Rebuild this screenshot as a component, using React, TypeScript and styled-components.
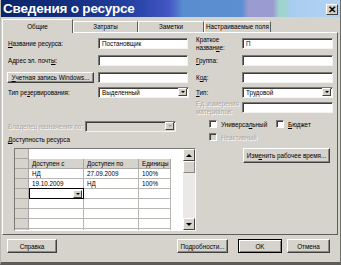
import React from 'react';
import styled, { createGlobalStyle } from 'styled-components';

const GlobalStyle = createGlobalStyle`
  html, body {
    margin: 0;
    padding: 0;
    background: #d6d2cc;
  }
  body {
    font-family: "Liberation Sans", Arial, sans-serif;
    font-size: 6.3px;
    color: #000;
  }
`;

const Window = styled.div`
  width: 341px;
  height: 265px;
  box-sizing: border-box;
  background: #d6d2cc;
  border-left: 1px solid #bcb9b3;
  border-right: 1px solid #6f6d69;
  border-bottom: 3px solid #5e5c58;
  display: flex;
  flex-direction: column;
  overflow: hidden;
`;

const TitleBar = styled.div`
  height: 17px;
  flex: none;
  display: flex;
  align-items: center;
  justify-content: space-between;
  padding: 0 2px 0 2px;
  background: linear-gradient(90deg,
    #0a2669 0px, #142f80 70px, #2442a3 130px, #4456c4 168px,
    #5a8dcf 182px, #5c8fd1 241px, #999bd1 247px, #9b9bd0 272px,
    #9fd4cc 278px, #a0d3cf 284px, #a9cdf0 290px, #b3d3f2 341px);
`;

const Caption = styled.div`
  color: #fff;
  font-weight: bold;
  font-size: 13.5px;
  letter-spacing: -0.2px;
  line-height: 17px;
`;

const CloseButton = styled.div`
  width: 12px;
  height: 11px;
  margin-top: 2px;
  box-sizing: border-box;
  background: #d4d0c8;
  border: 1px solid;
  border-color: #fff #404040 #404040 #fff;
  display: flex;
  align-items: center;
  justify-content: center;
  font-weight: bold;
  font-size: 10px;
  line-height: 9px;
`;

const Body = styled.div`
  flex: 1;
  display: flex;
  flex-direction: column;
  padding: 0 2px 0 1px;
`;

const TabStrip = styled.div`
  height: 15px;
  display: flex;
  align-items: flex-end;
  position: relative;
  z-index: 1;
`;

const Tab = styled.div<{ $w: number; $active?: boolean }>`
  width: ${p => p.$w}px;
  height: ${p => (p.$active ? 14 : 11)}px;
  margin-bottom: ${p => (p.$active ? -1 : 0)}px;
  box-sizing: border-box;
  background: #d6d2cc;
  border: 1px solid;
  border-bottom: none;
  border-color: #fff #5f5d59 transparent #fff;
  text-align: center;
  line-height: ${p => (p.$active ? 12 : 10)}px;
  padding-top: ${p => (p.$active ? 1 : 0)}px;
  white-space: nowrap;
`;

const Panel = styled.div`
  height: 203px;
  box-sizing: border-box;
  border: 1px solid;
  border-color: #fff #5f5d59 #5f5d59 #fff;
  padding: 5px 3px 0 5px;
  display: flex;
  gap: 5px;
`;

const LeftCol = styled.div`
  width: 183px;
  display: flex;
  flex-direction: column;
`;

const RightCol = styled.div`
  width: 140px;
  display: flex;
  flex-direction: column;
`;

const Row = styled.div<{ $top?: number; $h?: number }>`
  display: flex;
  align-items: center;
  height: ${p => p.$h ?? 11}px;
  margin-top: ${p => p.$top ?? 0}px;
`;

const Label = styled.div<{ $w: number; $disabled?: boolean }>`
  width: ${p => p.$w}px;
  flex: none;
  white-space: nowrap;
  color: ${p => (p.$disabled ? '#aaa8a4' : '#000')};
  text-shadow: ${p => (p.$disabled ? '1px 1px 0 #fff' : 'none')};
`;

const TwoLineLabel = styled(Label)`
  line-height: 8px;
  align-self: flex-start;
  margin-top: -2px;
`;

const Input = styled.div<{ $w: number }>`
  width: ${p => p.$w}px;
  height: 11px;
  box-sizing: border-box;
  background: #fff;
  border: 1px solid;
  border-color: #7b7975 #f4f3f1 #f4f3f1 #7b7975;
  box-shadow: inset 1px 1px 0 #3f3e3c;
  padding-left: 3px;
  line-height: 9px;
  white-space: nowrap;
`;

const Select = styled(Input)<{ $disabled?: boolean }>`
  display: flex;
  justify-content: space-between;
  background: ${p => (p.$disabled ? '#d6d2cc' : '#fff')};
  padding-right: 1px;
`;

const ArrowBox = styled.div<{ $disabled?: boolean }>`
  width: 9px;
  height: 8px;
  box-sizing: border-box;
  background: #d4d0c8;
  border: 1px solid;
  border-color: #fff #404040 #404040 #fff;
  display: flex;
  align-items: center;
  justify-content: center;
  &::after {
    content: '';
    border-left: 2px solid transparent;
    border-right: 2px solid transparent;
    border-top: 2px solid ${p => (p.$disabled ? '#9a9894' : '#000')};
  }
`;

const Button = styled.div<{ $w: number; $h?: number; $default?: boolean }>`
  width: ${p => p.$w}px;
  height: ${p => p.$h ?? 14}px;
  flex: none;
  box-sizing: border-box;
  background: #d6d2cc;
  border: 1px solid;
  border-color: ${p => (p.$default ? '#000' : '#fff #404040 #404040 #fff')};
  box-shadow: ${p =>
    p.$default
      ? 'inset 1px 1px 0 #fff, inset -1px -1px 0 #808080'
      : 'inset -1px -1px 0 #8a8884'};
  display: flex;
  align-items: center;
  justify-content: center;
  white-space: nowrap;
`;

const SmallButton = styled(Button)`
  margin-left: -1px;
  margin-right: 4px;
`;

const CheckRow = styled.div<{ $top: number }>`
  display: flex;
  align-items: center;
  height: 8px;
  margin-top: ${p => p.$top}px;
  padding-left: 13px;
`;

const Check = styled.div<{ $disabled?: boolean; $w?: number }>`
  display: flex;
  align-items: center;
  gap: 4px;
  width: ${p => (p.$w ? `${p.$w}px` : 'auto')};
  color: ${p => (p.$disabled ? '#aaa8a4' : '#000')};
  text-shadow: ${p => (p.$disabled ? '1px 1px 0 #fff' : 'none')};
  white-space: nowrap;
`;

const Box = styled.div<{ $disabled?: boolean }>`
  width: 8px;
  height: 8px;
  flex: none;
  box-sizing: border-box;
  background: ${p => (p.$disabled ? '#d6d2cc' : '#fff')};
  border: 1px solid;
  border-color: #7b7975 #fff #fff #7b7975;
  box-shadow: inset 1px 1px 0 #3f3e3c;
`;

const SectionTitle = styled.div`
  margin-top: 3px;
  line-height: 9px;
`;

const Table = styled.div`
  margin: 4px 0 0 6px;
  width: 182px;
  height: 83px;
  box-sizing: border-box;
  border: 1px solid;
  border-color: #7b7975 #fff #fff #7b7975;
  background: #fff;
  display: flex;
  overflow: hidden;
`;

const Sheet = styled.div`
  flex: 1;
  display: flex;
  flex-direction: column;
`;

const SheetRow = styled.div`
  display: grid;
  grid-template-columns: 14px 55px 55px 32px 1fr;
  height: 10px;
  flex: none;
`;

const RowHead = styled.div`
  background: #d6d2cc;
  border-right: 1px solid #a9a7a3;
  border-bottom: 1px solid #a9a7a3;
`;

const HeadCell = styled.div`
  background: #d6d2cc;
  border-right: 1px solid #a9a7a3;
  border-bottom: 1px solid #a9a7a3;
  padding-left: 3px;
  line-height: 9px;
  white-space: nowrap;
`;

const Cell = styled.div`
  border-right: 1px solid #b9b7b3;
  border-bottom: 1px solid #b9b7b3;
  padding-left: 3px;
  line-height: 9px;
  white-space: nowrap;
`;

const Blank = styled.div``;

const EditCell = styled.div`
  border: 1px solid #000;
  margin-top: -1px;
  display: flex;
  justify-content: flex-end;
  align-items: center;
  padding-right: 1px;
  background: #fff;
`;

const ScrollBar = styled.div`
  width: 12px;
  flex: none;
  display: flex;
  flex-direction: column;
  background: #ebe9e5;
`;

const ScrollBtn = styled.div<{ $up?: boolean }>`
  height: 12px;
  box-sizing: border-box;
  background: #d6d2cc;
  border: 1px solid;
  border-color: #fff #404040 #404040 #fff;
  display: flex;
  align-items: center;
  justify-content: center;
  &::after {
    content: '';
    border-left: 3px solid transparent;
    border-right: 3px solid transparent;
    ${p => (p.$up ? 'border-bottom' : 'border-top')}: 3px solid #000;
  }
`;

const Thumb = styled.div`
  height: 12px;
  box-sizing: border-box;
  background: #d6d2cc;
  border: 1px solid;
  border-color: #fff #8a8884 #8a8884 #fff;
`;

const Track = styled.div`
  flex: 1;
`;

const Footer = styled.div`
  display: flex;
  align-items: center;
  padding: 4px 0 0 5px;
`;

const Gap = styled.div<{ $w: number }>`
  width: ${p => p.$w}px;
  flex: none;
`;

type Row3 = [string, string, string];

const rows: Row3[] = [
  ['НД', '27.09.2009', '100%'],
  ['19.10.2009', 'НД', '100%'],
];

export default function App() {
  return (
    <>
      <GlobalStyle />
      <Window>
        <TitleBar>
          <Caption>Сведения о ресурсе</Caption>
          <CloseButton>✕</CloseButton>
        </TitleBar>
        <Body>
          <TabStrip>
            <Tab $w={71} $active>Общие</Tab>
            <Tab $w={65}>Затраты</Tab>
            <Tab $w={66}>Заметки</Tab>
            <Tab $w={67}>Настраиваемые поля</Tab>
          </TabStrip>
          <Panel>
            <LeftCol>
              <Row>
                <Label $w={90}><u>Н</u>азвание ресурса:</Label>
                <Input $w={90}>Постановщик</Input>
              </Row>
              <Row $top={6}>
                <Label $w={90}>Адрес эл. почт<u>ы</u>:</Label>
                <Input $w={90} />
              </Row>
              <Row $top={6}>
                <SmallButton $w={87} $h={11}>
                  <span><u>У</u>четная запись Windows...</span>
                </SmallButton>
                <Input $w={90} />
              </Row>
              <Row $top={4}>
                <Label $w={90}>Тип ре<u>з</u>ервирования:</Label>
                <Select $w={91}>
                  Выделенный
                  <ArrowBox />
                </Select>
              </Row>
              <Row $top={23}>
                <Label $w={77} $disabled>Владелец назначения по:</Label>
                <Select $w={91} $disabled>
                  <span />
                  <ArrowBox $disabled />
                </Select>
              </Row>
              <SectionTitle><u>Д</u>оступность ресурса</SectionTitle>
              <Table>
                <Sheet>
                  <SheetRow>
                    <RowHead />
                    <Blank />
                  </SheetRow>
                  <SheetRow>
                    <RowHead />
                    <HeadCell>Доступен с</HeadCell>
                    <HeadCell>Доступен по</HeadCell>
                    <HeadCell>Единицы</HeadCell>
                    <Blank />
                  </SheetRow>
                  {rows.map((r, i) => (
                    <SheetRow key={i}>
                      <RowHead />
                      <Cell>{r[0]}</Cell>
                      <Cell>{r[1]}</Cell>
                      <Cell>{r[2]}</Cell>
                      <Blank />
                    </SheetRow>
                  ))}
                  <SheetRow>
                    <RowHead />
                    <EditCell>
                      <ArrowBox />
                    </EditCell>
                    <Cell />
                    <Cell />
                    <Blank />
                  </SheetRow>
                  {[0, 1, 2, 3].map(i => (
                    <SheetRow key={'e' + i}>
                      <RowHead />
                      <Cell />
                      <Cell />
                      <Cell />
                      <Blank />
                    </SheetRow>
                  ))}
                </Sheet>
                <ScrollBar>
                  <ScrollBtn $up />
                  <Thumb />
                  <Track />
                  <ScrollBtn />
                </ScrollBar>
              </Table>
            </LeftCol>
            <RightCol>
              <Row>
                <TwoLineLabel $w={46}>Краткое<br />назван<u>и</u>е:</TwoLineLabel>
                <Input $w={91}>П</Input>
              </Row>
              <Row $top={6}>
                <Label $w={46}><u>Г</u>руппа:</Label>
                <Input $w={91} />
              </Row>
              <Row $top={6}>
                <Label $w={46}>К<u>о</u>д:</Label>
                <Input $w={91} />
              </Row>
              <Row $top={4}>
                <Label $w={46}><u>Т</u>ип:</Label>
                <Select $w={91}>
                  Трудовой
                  <ArrowBox />
                </Select>
              </Row>
              <Row $top={4}>
                <TwoLineLabel $w={46} $disabled>Ед. измерения<br />материалов:</TwoLineLabel>
                <Input $w={91} />
              </Row>
              <CheckRow $top={7}>
                <Check $w={67}><Box /><span>Универса<u>л</u>ьный</span></Check>
                <Check><Box /><span><u>Б</u>юджет</span></Check>
              </CheckRow>
              <CheckRow $top={5}>
                <Check $disabled><Box $disabled /><span>Неактивный</span></Check>
              </CheckRow>
              <Row $top={7} $h={15}>
                <Gap $w={47} />
                <Button $w={87} $h={15}>
                  <span>Изм<u>е</u>нить рабочее время...</span>
                </Button>
              </Row>
            </RightCol>
          </Panel>
          <Footer>
            <Button $w={50}>Справка</Button>
            <Gap $w={120} />
            <Button $w={51}>Подробности...</Button>
            <Gap $w={10} />
            <Button $w={44} $default>OK</Button>
            <Gap $w={5} />
            <Button $w={43}>Отмена</Button>
          </Footer>
        </Body>
      </Window>
    </>
  );
}
